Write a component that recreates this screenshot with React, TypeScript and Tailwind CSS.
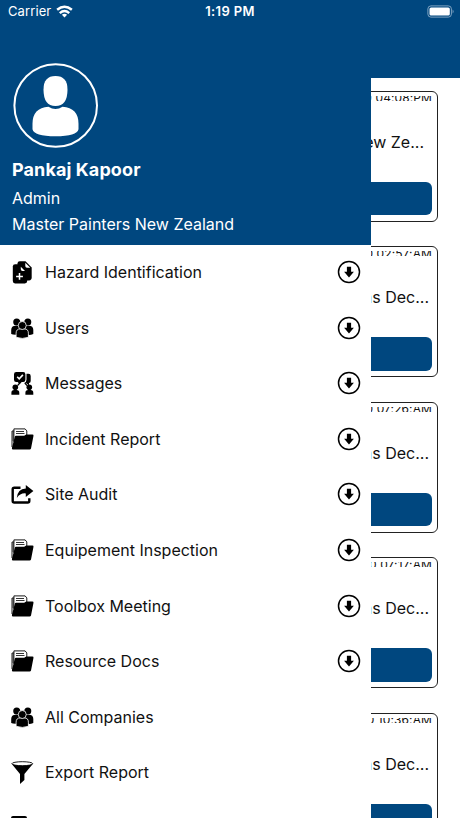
import type { ReactNode } from 'react';

const Svg = ({ children }: { children: ReactNode }) => (
    <svg viewBox="0 0 24 24" className="w-6 h-6 shrink-0" fill="currentColor">
        {children}
    </svg>
);

const HazardIcon = () => (
    <Svg>
        <path d="M7.500 3.400Q7.500 1.200 9.700 1.200H15.500l6.200 6.200v10.200Q21.700 20.400 19 20.400H8Z" />
        <path d="M2.800 6.500Q2.800 4.200 5.100 4.200H11l6.200 6V21Q17.200 23.400 14.800 23.400H5.100Q2.800 23.400 2.800 21Z" />
        <path d="M15.300 2.800v3.300q0 1.700 1.700 1.700h3.300ZM10.800 6.800v2.500q0 1.700 1.700 1.700H15Z" fill="#fff" />
        <path d="M9.500 13v6.800M6.100 16.400h6.800" fill="none" stroke="#fff" strokeWidth="1.500" />
    </Svg>
);

const UsersIcon = () => (
    <Svg>
        <circle cx="6.700" cy="5.900" r="3.500" />
        <circle cx="17.800" cy="5.900" r="3.500" />
        <path d="M1.200 18v-4q0-4.300 4.500-4.300h13.100q4.500 0 4.500 4.300v4q-3 1.200-5.500.8H6.500Q3 19 1.200 18Z" />
        <g stroke="#fff" strokeWidth=".8">
            <path d="M6.100 21.300v-4.100q0-4.300 4.200-4.300h3.900q4.200 0 4.200 4.300v4.100q-6 2.200-12.300 0Z" />
            <circle cx="12.250" cy="9.500" r="4" />
        </g>
    </Svg>
);

const MessagesIcon = () => (
    <Svg>
        <path d="M6.200 1h7q2.200 0 2.200 2.200v5.500q0 2.200-2.200 2.200h-1.500L9.700 13.300 7.700 10.900H6.200Q4 10.900 4 8.700V3.200Q4 1 6.200 1Z" />
        <path d="M16.500 2.700h2q2.200 0 2.200 2.200v5q0 2-1.700 2.200v2.300l-3-2.300h-1.600q2.100-1 2.100-3.700Z" />
        <path d="m7.200 5.800 2 2 3.700-3.900" fill="none" stroke="#fff" strokeWidth="1.600" />
        <circle cx="5.300" cy="16.200" r="2.800" />
        <circle cx="19.300" cy="16.200" r="2.800" />
        <path d="M1.400 23.700v-2q0-2.700 2.700-2.700h2.500Q9.300 19 9.300 21.700v2ZM15.400 23.700v-2q0-2.700 2.700-2.700h2.500q2.700 0 2.700 2.700v2Z" />
        <path d="m7.500 14.600 2.300-2.600M17.100 14.600l-2.300-2.600" stroke="currentColor" strokeWidth="1.300" />
    </Svg>
);

const FolderIcon = () => (
    <Svg>
        <path d="M2 20V4h2.200M3.900 15V1.900h11.200l1.700 2V8" fill="#fff" stroke="currentColor" strokeWidth=".9" />
        <path d="M6 4.500h8M6 6.500h8.500M3.100 4.500V14" stroke="currentColor" strokeWidth=".8" />
        <path d="M1.900 21 4.900 9.500q.2-.8 1-.8h8.300l2-1.300h6.200q1.300 0 1.100 1.300L21 21.400q-.3 1.100-1.400 1.100H3.100q-1.500 0-1.200-1.500Z" />
    </Svg>
);

const ShareIcon = () => (
    <Svg>
        <path d="M10.500 5.700H4.200q-1.500 0-1.500 1.500v11.800q0 1.500 1.500 1.500h13.600q1.500 0 1.500-1.500v-2.700" fill="none" stroke="currentColor" strokeWidth="2.400" />
        <path d="M15.800 3 23.400 8.900l-7.600 6v-3.500q-5.600-.5-9 4.500Q7.600 6.900 15.800 6.500Z" />
    </Svg>
);

const FunnelIcon = () => (
    <Svg>
        <path d="M1.600 3.800 10 14v9.900l4.400-3.800V14L23 3.800Z" />
        <ellipse cx="12.300" cy="3.700" rx="10.400" ry="2" fill="#fff" stroke="currentColor" strokeWidth=".9" />
    </Svg>
);

const ArrowDown = () => (
    <svg viewBox="0 0 24 24" className="w-6 h-6 shrink-0">
        <circle cx="12" cy="12" r="10.500" fill="none" stroke="currentColor" strokeWidth="1.500" />
        <path d="M9.900 6.700h4.200v5h2.800L12 17.400 7.100 11.700h2.800Z" />
    </svg>
);

const menu = [
    { label: 'Hazard Identification', icon: HazardIcon, expandable: true },
    { label: 'Users', icon: UsersIcon, expandable: true },
    { label: 'Messages', icon: MessagesIcon, expandable: true },
    { label: 'Incident Report', icon: FolderIcon, expandable: true },
    { label: 'Site Audit', icon: ShareIcon, expandable: true },
    { label: 'Equipement Inspection', icon: FolderIcon, expandable: true },
    { label: 'Toolbox Meeting', icon: FolderIcon, expandable: true },
    { label: 'Resource Docs', icon: FolderIcon, expandable: true },
    { label: 'All Companies', icon: UsersIcon, expandable: false },
    { label: 'Export Report', icon: FunnelIcon, expandable: false },
];

const cards = [
    { time: '0 04:08:PM', title: 'ew Ze...', pad: 'pr-2' },
    { time: '0 02:57:AM', title: 'ns Dec...', pad: 'pr-[3px]' },
    { time: '0 07:26:AM', title: 'ns Dec...', pad: 'pr-[3px]' },
    { time: '20 07:17:AM', title: 'ns Dec...', pad: 'pr-[3px]' },
    { time: '0 10:36:AM', title: 'ns Dec...', pad: 'pr-[3px]' },
];

const StatusBar = () => (
    <div className="absolute inset-x-0 top-0 h-6 grid grid-cols-3 items-center text-white text-[13px] pl-2 pr-[5px]">
        <div className="flex items-center gap-[5px]">
            <span className="tracking-[0.1px]">Carrier</span>
            <svg viewBox="0 0 18 13" className="w-[17px] h-[13px] -mt-px" fill="none" stroke="currentColor" strokeWidth="2.600">
                <path d="M1.200 4.700q7.800-6.600 15.600 0M4 8.200q5-4.300 10 0" />
                <path d="m9 12.800-2.800-2.800q2.800-2 5.600 0Z" fill="currentColor" stroke="none" />
            </svg>
        </div>
        <span className="text-center font-semibold tracking-[0.35px] -ml-[3px]">1:19 PM</span>
        <svg viewBox="0 0 28 13" className="w-7 h-[13px] justify-self-end -mt-px">
            <rect x=".9" y=".9" width="23.500" height="11.200" rx="3" fill="none" stroke="#7fa3c1" />
            <rect x="2.500" y="2.500" width="20.300" height="8" rx="1.600" fill="#fff" />
            <path d="M25.600 4.500q2 2 0 4Z" fill="#7fa3c1" />
        </svg>
    </div>
);

const App = () => {
    return (
        <div className="relative w-full h-screen overflow-hidden bg-white text-[#111] font-[Inter,sans-serif]">
            <div className="h-[78px] bg-[#00477f]" />
            <div className="pt-[12.500px] pl-5 pr-[22px] space-y-[24.500px]">
                {cards.map((card) => (
                    <div key={card.time} className="h-[131px] border-[1.5px] border-[#222] rounded-md pt-1 px-[5px] flex flex-col">
                        <div className="h-[5px] overflow-hidden flex items-center justify-end">
                            <span className="text-xs leading-none tracking-[0.1px]">{card.time}</span>
                        </div>
                        <div className={`mt-[29px] h-6 text-right text-base leading-6 ${card.pad}`}>{card.title}</div>
                        <div className="mt-7 h-[33.500px] shrink-0 rounded-md bg-[#00477f]" />
                    </div>
                ))}
            </div>

            <div className="absolute left-0 top-0 w-[371px] h-full overflow-hidden bg-white">
                <div className="h-[244.500px] bg-[#00477f] text-white pl-3 pt-[63px]">
                    <svg viewBox="0 0 86 86" className="w-[86px] h-[86px]">
                        <circle cx="43.700" cy="42.500" r="41.300" fill="none" stroke="#fff" strokeWidth="2" />
                        <path d="M43.500 13q12 0 12 13.500 0 16.500-12 16.500t-12-16.500Q31.500 13 43.500 13Z" fill="#fff" />
                        <path d="M36.500 43.800q7 4.500 14 0 16 1.200 16 17v5.500q-1.500 7-23 7t-23-7v-5.500q0-15.800 16-17Z" fill="#fff" />
                    </svg>
                    <div className="mt-[9px] text-lg leading-6 font-bold tracking-[0.1px]">Pankaj Kapoor</div>
                    <div className="mt-1 text-base leading-6">Admin</div>
                    <div className="mt-[2px] text-base leading-6">Master Painters New Zealand</div>
                </div>
                {menu.map(({ label, icon: Icon, expandable }) => (
                    <div key={label} className="h-[55.550px] px-[10px] flex items-center text-black">
                        <Icon />
                        <span className="ml-[11px] grow text-base text-[#111]">{label}</span>
                        {expandable && <ArrowDown />}
                    </div>
                ))}
                <div className="mt-[16.500px] ml-[11px] w-4 h-4 rounded-xs bg-black" />
            </div>

            <StatusBar />
        </div>
    );
};

export default App;
